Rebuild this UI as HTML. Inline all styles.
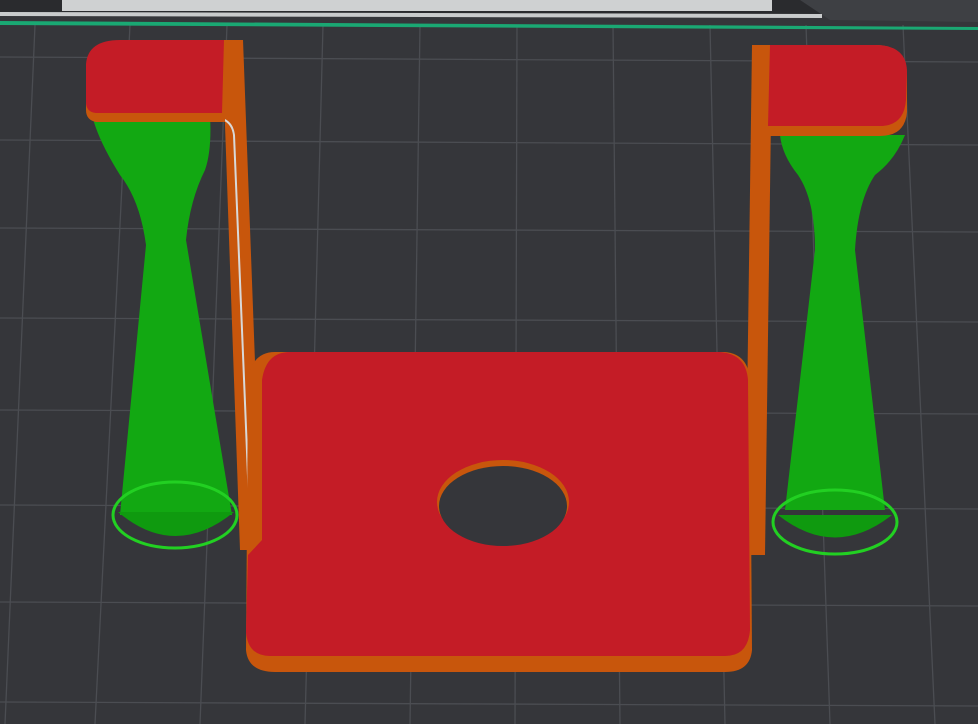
<!DOCTYPE html>
<html><head><style>html,body{margin:0;padding:0;width:978px;height:724px;overflow:hidden;background:#35363a}</style></head>
<body>
<svg width="978" height="724" viewBox="0 0 978 724" xmlns="http://www.w3.org/2000/svg">
<rect width="978" height="724" fill="#35363a"/>
<g stroke="#4b4d52" stroke-width="1.3">
<line x1="35" y1="25" x2="5" y2="724"/>
<line x1="130" y1="25" x2="95" y2="724"/>
<line x1="227" y1="25" x2="200" y2="724"/>
<line x1="323" y1="25" x2="305" y2="724"/>
<line x1="420" y1="25" x2="410" y2="724"/>
<line x1="517" y1="25" x2="515" y2="724"/>
<line x1="613" y1="25" x2="620" y2="724"/>
<line x1="710" y1="25" x2="725" y2="724"/>
<line x1="806" y1="25" x2="830" y2="724"/>
<line x1="903" y1="25" x2="935" y2="724"/>
<line x1="0" y1="57" x2="978" y2="62"/>
<line x1="0" y1="140" x2="978" y2="145"/>
<line x1="0" y1="228" x2="978" y2="232"/>
<line x1="0" y1="318" x2="978" y2="322"/>
<line x1="0" y1="410" x2="978" y2="414"/>
<line x1="0" y1="505" x2="978" y2="509"/>
<line x1="0" y1="602" x2="978" y2="606"/>
<line x1="0" y1="702" x2="978" y2="706"/>
</g>
<rect x="0" y="0" width="978" height="14" fill="#2a2b2e"/>
<polygon points="800,0 978,0 978,22 830,20" fill="#3e4044"/>
<rect x="62" y="0" width="710" height="11" fill="#cfd1d2"/>
<polygon points="0,12 822,14 822,18 0,16" fill="#c9cbcc"/>
<polygon points="0,21 978,27 978,30 0,25" fill="#1aa873"/>
<!-- left support -->
<path d="M92,115 L210,115 Q212,150 205,170 Q190,200 186,240 L232,515 L120,515 L146,245 Q140,200 120,175 Q98,140 92,115 Z" fill="#12a812"/>
<path d="M118,512 Q175,560 234,512" fill="#0f9a0f"/>
<ellipse cx="175" cy="515" rx="62" ry="33" fill="none" stroke="#22d022" stroke-width="3"/>
<!-- left wall -->
<polygon points="222,40 243,40 262,550 240,550" fill="#c8560c"/>
<path d="M218,118 Q232,120 234,135 L250,525 Q252,540 262,542" fill="none" stroke="#d8d8d8" stroke-width="2"/>
<!-- left pad -->
<path d="M86,68 Q88,42 120,42 L225,42 L225,122 L96,122 Q86,120 86,110 Z" fill="#c8560c"/>
<path d="M86,64 Q88,40 120,40 L224,40 L222,113 L96,113 Q86,112 86,102 Z" fill="#c41c26"/>
<!-- right support -->
<path d="M780,135 L905,135 Q895,160 875,175 Q858,200 855,250 L885,510 L785,510 L815,250 Q815,200 798,175 Q782,155 780,135 Z" fill="#12a812"/>
<path d="M778,515 Q835,560 892,515" fill="#0f9a0f"/>
<ellipse cx="835" cy="522" rx="62" ry="32" fill="none" stroke="#22d022" stroke-width="3"/>
<!-- right wall -->
<polygon points="752,45 772,45 765,555 745,555" fill="#c8560c"/>
<!-- right pad -->
<path d="M755,45 L875,45 Q907,45 907,75 L907,112 Q905,136 880,136 L760,136 Z" fill="#c8560c"/>
<path d="M770,45 L875,45 Q907,45 907,72 L906,100 Q904,126 880,126 L768,126 Z" fill="#c41c26"/>
<!-- main plate -->
<path d="M275,352 L725,352 Q748,354 750,380 L752,650 Q750,672 725,672 L275,672 Q248,672 246,650 L248,380 Q252,352 275,352Z" fill="#c8560c"/>
<path d="M290,352 L720,352 Q746,354 748,380 L750,630 Q748,656 725,656 L270,656 Q248,656 246,632 L248,555 L262,540 L262,380 Q266,352 290,352Z" fill="#c41c26"/>
<ellipse cx="503" cy="502" rx="66" ry="42" fill="#c8560c"/>
<ellipse cx="503" cy="506" rx="64" ry="40" fill="#35363a"/>
</svg>
</body></html>
